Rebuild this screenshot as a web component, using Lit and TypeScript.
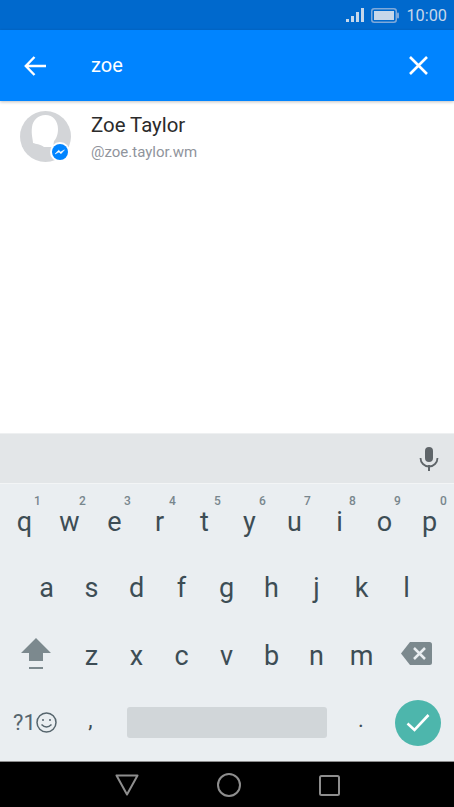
import { html, css, LitElement, svg } from 'lit';
import { customElement } from 'lit/decorators.js';

const ROW_1 = [
  ['q', '1'], ['w', '2'], ['e', '3'], ['r', '4'], ['t', '5'],
  ['y', '6'], ['u', '7'], ['i', '8'], ['o', '9'], ['p', '0'],
];
const ROW_2 = ['a', 's', 'd', 'f', 'g', 'h', 'j', 'k', 'l'];
const ROW_3 = ['z', 'x', 'c', 'v', 'b', 'n', 'm'];

@customElement('app-root')
export class AppRoot extends LitElement {
  static override styles = css`
    :host {
      display: flex;
      flex-direction: column;
      width: 454px;
      height: 807px;
      overflow: hidden;
      background: #fff;
      font-family: Roboto, sans-serif;
    }
    .status {
      height: 30px;
      flex: none;
      background: #0069cd;
      display: flex;
      align-items: center;
      justify-content: flex-end;
      gap: 7px;
      padding-right: 7px;
      color: #c6d7ea;
      font-size: 16.3px;
    }
    .status svg { display: block; }
    .header {
      height: 71px;
      flex: none;
      background: #0084ff;
      display: flex;
      align-items: center;
      color: #fff;
      box-shadow: 0 1px 3px rgba(0, 0, 0, 0.25);
      position: relative;
    }
    .back { margin-left: 24px; flex: none; display: block; }
    .query { margin-left: 44px; flex: 1; font-size: 20px; padding-bottom: 1px; }
    .close { margin-right: 26px; flex: none; display: block; }
    .result {
      display: flex;
      align-items: flex-start;
      padding: 10px 0 0 20px;
      gap: 20px;
    }
    .avatar { position: relative; width: 51px; height: 51px; flex: none; }
    .avatar svg { display: block; }
    .badge { position: absolute; left: 30px; top: 31px; }
    .name { font-size: 20.4px; color: #2b2b2b; line-height: 26px; margin-top: 1px; }
    .handle { font-size: 15px; color: #90949c; line-height: 20px; margin-top: 4px; }
    .spacer { flex: 1; }
    .suggest {
      flex: none;
      background: #e3e6e8;
      border-top: 1px solid #eef0f1;
      border-bottom: 1px solid #f3f5f6;
      display: flex;
      align-items: center;
      justify-content: flex-end;
      padding-right: 15px;
      box-sizing: border-box;
      height: 51px;
    }
    .keyboard {
      height: 277px;
      flex: none;
      background: #eaeef1;
      color: #3d4d55;
      box-sizing: border-box;
      padding-left: 2px;
      display: grid;
      grid-template-rows: 70px 67px 66px 74px;
    }
    .row { display: flex; align-items: center; }
    .row.second { padding-left: 22px; }
    .key {
      width: 45px;
      flex: none;
      text-align: center;
      font-size: 27px;
      line-height: 32px;
      position: relative;
    }
    .key sup {
      position: absolute;
      left: 32px;
      top: -12px;
      font-size: 12px;
      line-height: 14px;
      font-weight: 500;
      color: #78868d;
    }
    .row.first { padding-top: 5px; box-sizing: border-box; }
    .row.first .key:last-child sup { left: 33px; }
    .shift { width: 67px; flex: none; display: flex; justify-content: center; }
    .del { width: 65px; flex: none; display: flex; justify-content: center; padding-bottom: 2px; }
    .row.third .key { padding-top: 4px; }
    .symbols {
      width: 70px;
      margin-left: -2px;
      flex: none;
      display: flex;
      align-items: center;
      justify-content: center;
      font-size: 22px;
      color: #56656d;
      padding-bottom: 3px;
    }
    .comma { width: 41px; flex: none; text-align: center; font-size: 22px; padding-bottom: 9px; }
    .space {
      width: 200px;
      height: 31px;
      margin-left: 16px;
      margin-bottom: 3px;
      flex: none;
      border-radius: 3px;
      background: #d1d6d9;
    }
    .period { width: 68px; flex: none; text-align: center; font-size: 22px; padding-bottom: 9px; }
    .enter {
      width: 46px;
      height: 46px;
      margin-bottom: 3px;
      flex: none;
      border-radius: 50%;
      background: #4db6ac;
      display: flex;
      align-items: center;
      justify-content: center;
    }
    .nav {
      height: 46px;
      flex: none;
      background: #000;
      border-top: 1px solid #8c8c8c;
      box-sizing: border-box;
      display: flex;
      align-items: center;
      justify-content: center;
      gap: 78px;
      padding-top: 1px;
    }
    .nav svg { display: block; }
  `;

  private renderStatus() {
    return html`
      <div class="status">
        <svg width="18" height="16" viewBox="0 0 18 16" fill="currentColor">
          ${[[0, 12, 3], [5, 9, 6], [10, 5, 10], [15, 1, 14]].map(([x, y, h]) =>
            svg`<rect x=${x} y=${y} width="3" height=${h} />`
          )}
        </svg>
        <svg width="28" height="15" viewBox="0 0 28 15">
          <rect x="0.75" y="0.75" width="24.5" height="13.5" rx="2.5" fill="none" stroke="#7fa9da" stroke-width="1.5" />
          <rect x="3" y="3" width="20" height="9" fill="#c6d7ea" />
          <rect x="26" y="4.5" width="2" height="6" rx="1" fill="#7fa9da" />
        </svg>
        <span>10:00</span>
      </div>
    `;
  }

  private renderKeyboard() {
    return html`
      <div class="keyboard">
        <div class="row first">
          ${ROW_1.map(([k, n]) => html`<div class="key">${k}<sup>${n}</sup></div>`)}
        </div>
        <div class="row second">${ROW_2.map((k) => html`<div class="key">${k}</div>`)}</div>
        <div class="row third">
          <div class="shift">
            <svg width="30" height="32" viewBox="0 0 30 32" fill="#7c898e">
              <path d="M15 0 L30 15 L22 15 L22 23 L8 23 L8 15 L0 15 Z" />
              <rect x="8" y="29" width="14" height="2" />
            </svg>
          </div>
          ${ROW_3.map((k) => html`<div class="key">${k}</div>`)}
          <div class="del">
            <svg width="31" height="23" viewBox="0 0 31 23">
              <path d="M9 0 H28.5 Q31 0 31 2.5 V20.5 Q31 23 28.5 23 H9 L0 11.5 Z" fill="#7c898e" />
              <path d="M13 6 L24 17 M24 6 L13 17" stroke="#eaeef1" stroke-width="2.5" fill="none" />
            </svg>
          </div>
        </div>
        <div class="row fourth">
          <div class="symbols">
            <span>?1</span>
            <svg width="21" height="21" viewBox="0 0 21 21" fill="none" stroke="#56656d" stroke-width="1.5">
              <circle cx="10.5" cy="10.5" r="9.5" />
              <circle cx="7" cy="8" r="1" fill="#56656d" stroke="none" />
              <circle cx="14" cy="8" r="1" fill="#56656d" stroke="none" />
              <path d="M5.5 12.5 Q10.5 17.5 15.5 12.5" />
            </svg>
          </div>
          <div class="comma">,</div>
          <div class="space"></div>
          <div class="period">.</div>
          <div class="enter">
            <svg width="24" height="20" viewBox="0 0 24 20" fill="none" stroke="#fff" stroke-width="2.6">
              <path d="M1.5 10.5 L8.5 17 L22.5 2" />
            </svg>
          </div>
        </div>
      </div>
    `;
  }

  override render() {
    return html`
      ${this.renderStatus()}
      <div class="header">
        <svg class="back" width="23" height="20" viewBox="0 0 23 20" fill="none" stroke="#fff" stroke-width="2.4">
          <path d="M22 10 H2 M10.5 1 L1.8 10 L10.5 19" />
        </svg>
        <div class="query">zoe</div>
        <svg class="close" width="19" height="19" viewBox="0 0 19 19" fill="none" stroke="#fff" stroke-width="2.6">
          <path d="M1 1 L18 18 M18 1 L1 18" />
        </svg>
      </div>
      <div class="result">
        <div class="avatar">
          <svg width="51" height="51" viewBox="0 0 51 51">
            <circle cx="25.5" cy="25.5" r="25.5" fill="#d3d5d8" />
            <path d="M25.5 4 C33 4 38 10 38 18 C38 24 36 28 34 30 L33 36 L24 36 C20 33 16 33 13 32 C13 28 11 24 12 16 C13 9 18 4 25.5 4 Z" fill="#fff" />
          </svg>
          <svg class="badge" width="20" height="20" viewBox="0 0 20 20">
            <circle cx="10" cy="10" r="10" fill="#fff" />
            <circle cx="10" cy="10" r="8" fill="#0084ff" />
            <path d="M5 12 L8.6 8.2 L10.6 10 L14.5 7.8 L11 11.8 L9 10 Z" fill="#fff" stroke="#fff" stroke-width="0.5" />
          </svg>
        </div>
        <div>
          <div class="name">Zoe Taylor</div>
          <div class="handle">@zoe.taylor.wm</div>
        </div>
      </div>
      <div class="spacer"></div>
      <div class="suggest">
        <svg width="20" height="24" viewBox="0 0 20 24" fill="#5f6569">
          <rect x="6" y="0" width="8" height="15" rx="4" />
          <path d="M1.5 11 A8.5 8.5 0 0 0 18.5 11" fill="none" stroke="#5f6569" stroke-width="1.8" />
          <rect x="9" y="18" width="2" height="6" />
        </svg>
      </div>
      ${this.renderKeyboard()}
      <div class="nav">
        <svg width="24" height="22" viewBox="0 0 24 22" fill="none" stroke="#8e8e8e" stroke-width="2" stroke-linejoin="round">
          <path d="M1.5 1.5 H22.5 L12 20.5 Z" />
        </svg>
        <svg width="24" height="24" viewBox="0 0 24 24" fill="none" stroke="#8e8e8e" stroke-width="2">
          <circle cx="12" cy="12" r="11" />
        </svg>
        <svg width="21" height="21" viewBox="0 0 21 21" fill="none" stroke="#8e8e8e" stroke-width="2">
          <rect x="1" y="1" width="19" height="19" rx="1.5" />
        </svg>
      </div>
    `;
  }
}
